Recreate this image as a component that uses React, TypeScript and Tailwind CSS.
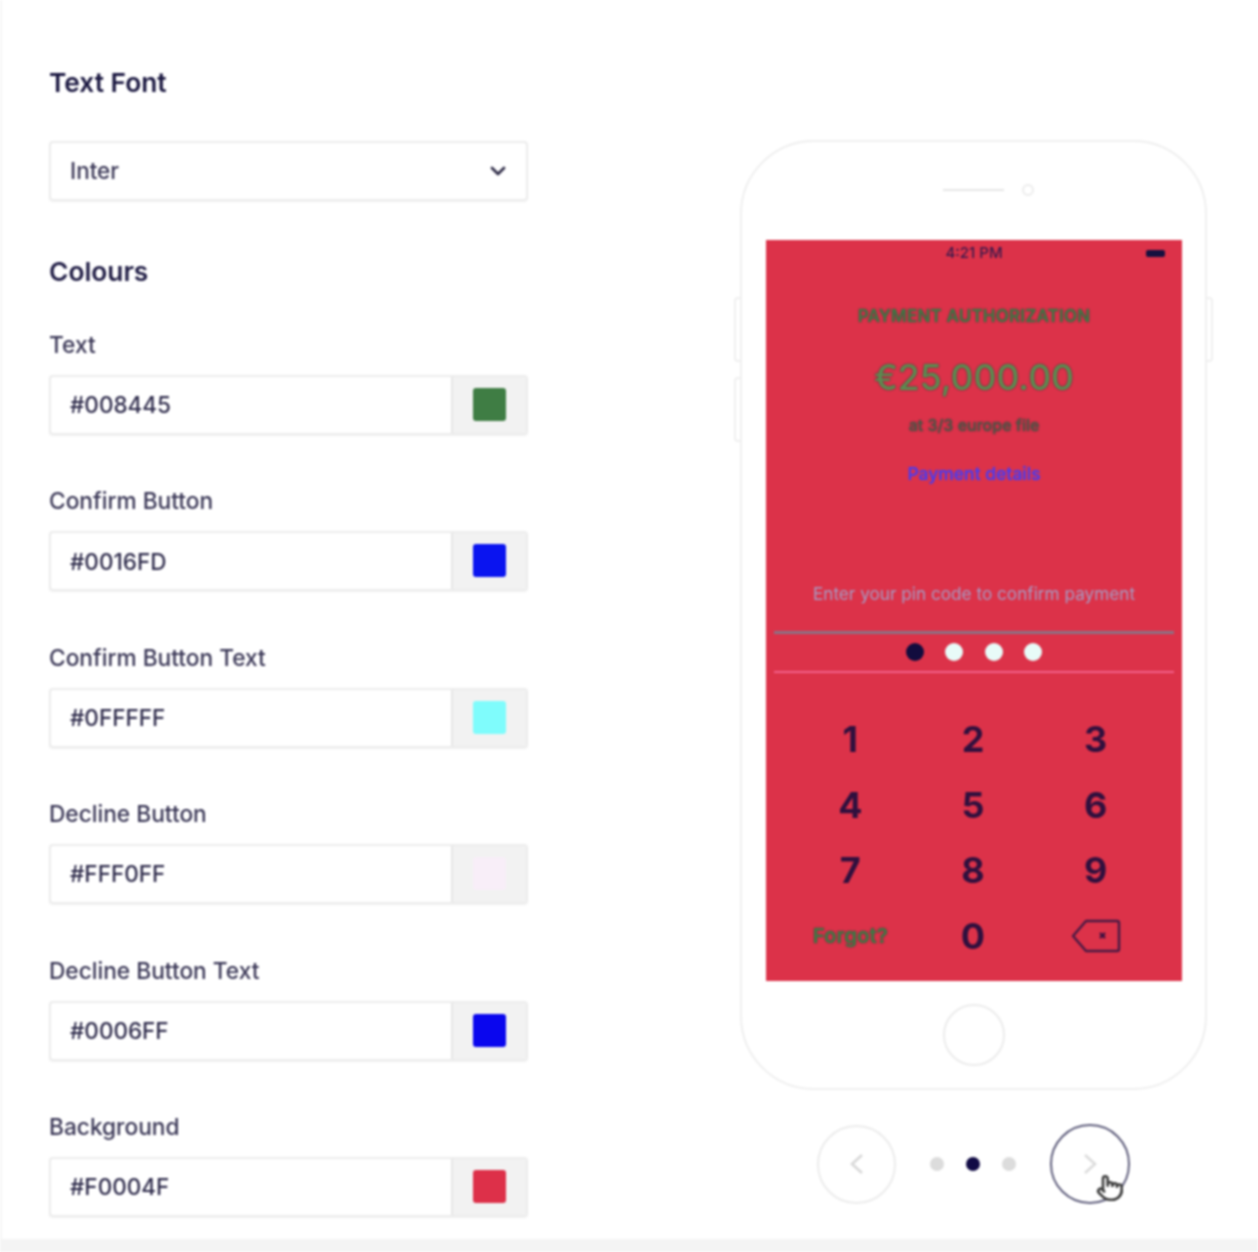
import { ChevronDown, Pointer } from "lucide-react";

const fields = [
  { label: "Text", value: "#008445", swatch: "bg-[#3f7d44]" },
  { label: "Confirm Button", value: "#0016FD", swatch: "bg-[#0a14f0]" },
  { label: "Confirm Button Text", value: "#0FFFFF", swatch: "bg-[#7ffcfc]" },
  { label: "Decline Button", value: "#FFF0FF", swatch: "bg-[#f8eef8]" },
  { label: "Decline Button Text", value: "#0006FF", swatch: "bg-[#0a06ee]" },
  { label: "Background", value: "#F0004F", swatch: "bg-[#dd3049]" },
];

const keys = ["1", "2", "3", "4", "5", "6", "7", "8", "9"];

function Field({ label, value, swatch }: { label: string; value: string; swatch: string }) {
  return (
    <div className="h-[156.4px]">
      <div className="h-[30px] text-[22.7px] leading-[30px] font-medium text-[#3a3756]">{label}</div>
      <div className="mt-[15px] flex h-[60px] rounded-[4px] border-2 border-[#ececec] bg-white shadow-[0_1px_2px_rgba(0,0,0,0.06)]">
        <div className="flex flex-1 items-center pl-[19px] text-[22.5px] font-medium text-[#2f2c4c]">{value}</div>
        <div className="flex w-[75px] items-center justify-center rounded-r-[3px] border-l-2 border-[#e6e6e6] bg-[#f2f2f2] pb-[1px]">
          <div className={`h-[33px] w-[33px] rounded-[3px] ${swatch}`} />
        </div>
      </div>
    </div>
  );
}

function Screen() {
  return (
    <div className="mt-[98px] ml-[24px] mr-[23px] flex h-[741px] flex-col items-center bg-[#dc3249]">
      <div className="relative flex h-[26px] w-full items-center justify-center text-[15px] font-medium text-[#3a1a4c]">
        4:21 PM
        <div className="absolute right-[17px] top-[10px] h-[7px] w-[19px] rounded-[2px] bg-[#16103f]" />
      </div>
      <div className="mt-[37px] h-[26px] text-[17px] leading-[26px] font-semibold tracking-[0.2px] text-[#3f7a44] [text-shadow:0_0_2px_#4a2a3c]">PAYMENT AUTHORIZATION</div>
      <div className="mt-[24px] h-[50px] text-[35.5px] leading-[50px] font-medium text-[#5d8a50] [text-shadow:0_0_2px_#3a2838]">€25,000.00</div>
      <div className="mt-[9px] h-[26px] text-[16px] leading-[26px] font-medium text-[#4f5a46] [text-shadow:0_0_2px_#4a2a3c]">at 3/3 europe file</div>
      <div className="mt-[23px] h-[26px] text-[17.5px] leading-[26px] font-medium text-[#4a3cf0] [text-shadow:0_0_1px_#4a3cf0]">Payment details</div>
      <div className="mt-[94px] h-[26px] text-[17.2px] leading-[26px] font-normal text-[#a69cc4]">Enter your pin code to confirm payment</div>
      <div className="mt-[24px] h-[42px] w-[400px] border-t-[3px] border-b-2 border-t-[#8d7084] border-b-[#f2608a]">
        <div className="flex h-full items-center justify-center gap-[21.5px] pb-[1px]">
          <div className="h-[18px] w-[18px] rounded-full bg-[#120c3e]" />
          <div className="h-[18px] w-[18px] rounded-full bg-[#e8fbf8]" />
          <div className="h-[18px] w-[18px] rounded-full bg-[#e8fbf8]" />
          <div className="h-[18px] w-[18px] rounded-full bg-[#e8fbf8]" />
        </div>
      </div>
      <div className="mt-[33px] mr-[2px] grid w-[368px] grid-cols-3 text-center text-[36px] font-bold text-[#30103e]">
        {keys.map((k) => (
          <div key={k} className="flex h-[65.7px] items-center justify-center leading-none">{k}</div>
        ))}
        <div className="flex h-[65.7px] items-center justify-center text-[20.5px] font-semibold text-[#3f7a44] [text-shadow:0_0_2px_#4a2a3c]">Forgot?</div>
        <div className="flex h-[65.7px] items-center justify-center leading-none">0</div>
        <div className="flex h-[65.7px] items-center justify-center">
          <svg width="50" height="36" viewBox="0 0 50 36" fill="none">
            <path d="M2 18 L15 3 H46 Q48 3 48 5 V31 Q48 33 46 33 H15 Z" stroke="#4a1a44" strokeWidth="2.5" strokeLinejoin="round" />
            <path d="M29 15 L34 20 M34 15 L29 20" stroke="#3a1040" strokeWidth="2.4" />
          </svg>
        </div>
      </div>
    </div>
  );
}

function Phone() {
  return (
    <div className="relative h-[950px] w-[467px] rounded-[74px] border-2 border-[#efefef] bg-white">
      <div className="absolute -left-[8px] top-[155px] h-[65px] w-[7px] rounded-l-[4px] border-2 border-r-0 border-[#f0f0f0]" />
      <div className="absolute -left-[8px] top-[235px] h-[65px] w-[7px] rounded-l-[4px] border-2 border-r-0 border-[#f0f0f0]" />
      <div className="absolute -right-[8px] top-[155px] h-[65px] w-[7px] rounded-r-[4px] border-2 border-l-0 border-[#f0f0f0]" />
      <div className="flex h-[0px] items-start justify-center">
        <div className="mt-[47px] ml-[-1px] h-[2px] w-[61px] bg-[#e6e6e6]" />
        <div className="relative">
          <div className="absolute left-[18px] top-[42px] h-[12px] w-[12px] rounded-full border-2 border-[#ececec]" />
        </div>
      </div>
      <Screen />
      <div className="mt-[23px] flex justify-center">
        <div className="h-[62px] w-[62px] rounded-full border-2 border-[#ececec]" />
      </div>
    </div>
  );
}

function Pager() {
  return (
    <div className="mt-[34px] flex items-center justify-center">
      <div className="flex h-[79px] w-[79px] items-center justify-center rounded-full border-2 border-[#ececec]">
        <svg width="16" height="24" viewBox="0 0 16 24" fill="none">
          <path d="M13 3 L3 12 L13 21" stroke="#d8d8d8" strokeWidth="2.6" />
        </svg>
      </div>
      <div className="mx-[34px] flex items-center gap-[22px]">
        <div className="h-[14px] w-[14px] rounded-full bg-[#dcdcdc]" />
        <div className="h-[14px] w-[14px] rounded-full bg-[#110b45]" />
        <div className="h-[14px] w-[14px] rounded-full bg-[#dcdcdc]" />
      </div>
      <div className="relative flex h-[80px] w-[80px] items-center justify-center rounded-full border-2 border-[#5f5e7c]">
        <svg width="16" height="24" viewBox="0 0 16 24" fill="none">
          <path d="M3 3 L13 12 L3 21" stroke="#dcdcdc" strokeWidth="2.6" />
        </svg>
        <Pointer size={28} strokeWidth={2.2} className="absolute left-[44px] top-[48px] fill-white text-[#3c3c3c]" />
      </div>
    </div>
  );
}

export default function App() {
  return (
    <div className="flex h-[1252px] w-[1258px] flex-col overflow-hidden bg-white font-['Inter',sans-serif] blur-[0.8px]">
      <div className="flex h-[1239px] border-l-2 border-[#f6f6f6]">
        <div className="ml-[47px] w-[479px]">
          <div className="mt-[66px] h-[34px] text-[26.3px] leading-[34px] font-semibold text-[#1a1740]">Text Font</div>
          <div className="mt-[41px] flex h-[60px] items-center justify-between rounded-[4px] border-2 border-[#ececec] pl-[19px] pr-[16px] pb-[1px] text-[22.5px] font-medium text-[#3a3756] shadow-[0_1px_2px_rgba(0,0,0,0.06)]">
            Inter
            <ChevronDown size={24} strokeWidth={2.8} className="text-[#2f2c48]" />
          </div>
          <div className="mt-[54px] h-[34px] text-[26.3px] leading-[34px] font-semibold text-[#201d45]">Colours</div>
          <div className="mt-[41px]">
            {fields.map((f) => (
              <Field key={f.label} {...f} />
            ))}
          </div>
        </div>
        <div className="ml-[212px] mt-[140px] w-[467px]">
          <Phone />
          <Pager />
        </div>
      </div>
      <div className="h-[13px] bg-[#f4f4f4]" />
    </div>
  );
}
